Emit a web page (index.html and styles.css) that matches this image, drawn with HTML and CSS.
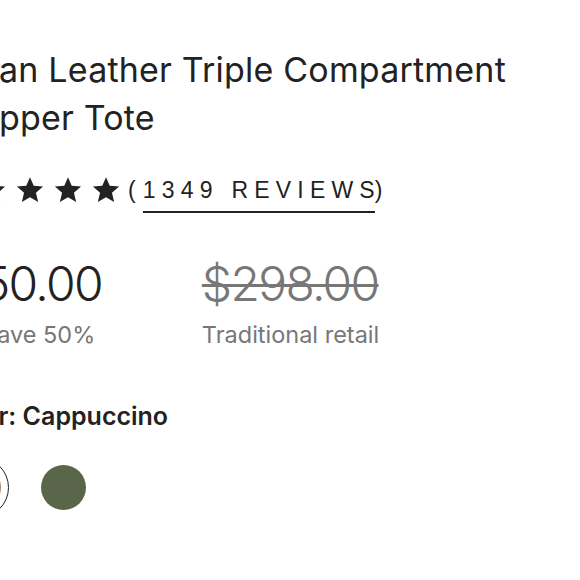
FILE: index.html
```html
<!DOCTYPE html>
<html lang="en">
<head>
<meta charset="utf-8">
<title>Vegan Leather Triple Compartment Shopper Tote</title>
<link rel="stylesheet" href="styles.css">
</head>
<body>
<main class="product">
  <h1 class="title">Vegan Leather Triple Compartment Shopper Tote</h1>
  <div class="rating">
    <div class="stars">
      <svg class="star" viewBox="0 0 24 24"><path d="M12 1l3.2 7.4 8 .7-6.1 5.3 1.9 7.9L12 18.2l-7 4.1 1.9-7.9L.8 9.1l8-.7z"/></svg>
      <svg class="star" viewBox="0 0 24 24"><path d="M12 1l3.2 7.4 8 .7-6.1 5.3 1.9 7.9L12 18.2l-7 4.1 1.9-7.9L.8 9.1l8-.7z"/></svg>
      <svg class="star" viewBox="0 0 24 24"><path d="M12 1l3.2 7.4 8 .7-6.1 5.3 1.9 7.9L12 18.2l-7 4.1 1.9-7.9L.8 9.1l8-.7z"/></svg>
      <svg class="star" viewBox="0 0 24 24"><path d="M12 1l3.2 7.4 8 .7-6.1 5.3 1.9 7.9L12 18.2l-7 4.1 1.9-7.9L.8 9.1l8-.7z"/></svg>
      <svg class="star" viewBox="0 0 24 24"><path d="M12 1l3.2 7.4 8 .7-6.1 5.3 1.9 7.9L12 18.2l-7 4.1 1.9-7.9L.8 9.1l8-.7z"/></svg>
    </div>
    <a class="reviews" href="#">(<span class="reviews-count">1349 REVIEW<span class="last">S</span></span>)</a>
  </div>
  <div class="prices">
    <div class="price-block">
      <div class="price">$150.00</div>
      <div class="price-note">You save 50%</div>
    </div>
    <div class="price-block">
      <div class="price price-old">$298.00</div>
      <div class="price-note">Traditional retail</div>
    </div>
  </div>
  <div class="color-label">Color: Cappuccino</div>
  <div class="swatches">
    <button class="swatch swatch-selected" aria-label="Cappuccino"><span class="swatch-dot dot-cappuccino"></span></button>
    <button class="swatch" aria-label="Olive"><span class="swatch-dot dot-olive"></span></button>
  </div>
</main>
</body>
</html>
```

FILE: styles.css
```css
html, body {
  margin: 0;
  padding: 0;
  background: #ffffff;
}

body {
  overflow: hidden;
  font-family: Inter, "Noto Sans", sans-serif;
  color: #222222;
}

.product {
  width: 620px;
  margin-left: -64px;
  padding-top: 46px;
}

.title {
  margin: 0;
  font-size: 34px;
  font-weight: 400;
  line-height: 48px;
  letter-spacing: 0.2px;
  color: #222222;
}

.rating {
  display: flex;
  align-items: center;
  margin-top: 28px;
  height: 40px;
}

.stars {
  display: flex;
  gap: 10px;
  padding-left: 4px;
}

.star {
  width: 28px;
  height: 28px;
  fill: #222222;
}

.reviews {
  margin-left: 8px;
  font-family: "Liberation Sans", Arial, sans-serif;
  font-size: 23px;
  letter-spacing: 6.2px;
  color: #222222;
  text-decoration: none;
}

.reviews-count {
  display: inline-block;
  border-bottom: 2px solid #222222;
  padding-bottom: 7px;
  margin-left: 1px;
  margin-bottom: -9px;
}

.reviews-count .last {
  letter-spacing: 0;
}

.prices {
  display: flex;
  gap: 100px;
  margin-top: 46px;
}

.price {
  font-size: 48px;
  line-height: 56px;
  font-weight: 300;
  letter-spacing: -1.7px;
  color: #222222;
}

.price-old {
  color: #777777;
  text-decoration: line-through;
  text-decoration-thickness: 3px;
}

.price-note {
  margin-top: 8px;
  font-size: 23.5px;
  color: #777777;
}

.color-label {
  margin-top: 52px;
  padding-left: 7px;
  font-size: 25px;
  font-weight: 600;
  color: #222222;
}

.swatches {
  display: flex;
  gap: 24px;
  margin-top: 26px;
  margin-left: 12px;
}

.swatch {
  width: 61px;
  height: 61px;
  padding: 0;
  border: 1.5px solid transparent;
  border-radius: 50%;
  background: transparent;
  display: flex;
  align-items: center;
  justify-content: center;
}

.swatch-selected {
  border-color: #222222;
}

.swatch-dot {
  width: 45px;
  height: 45px;
  border-radius: 50%;
}

.dot-cappuccino {
  background: #a98c72;
}

.dot-olive {
  background: #5a6649;
}
```
